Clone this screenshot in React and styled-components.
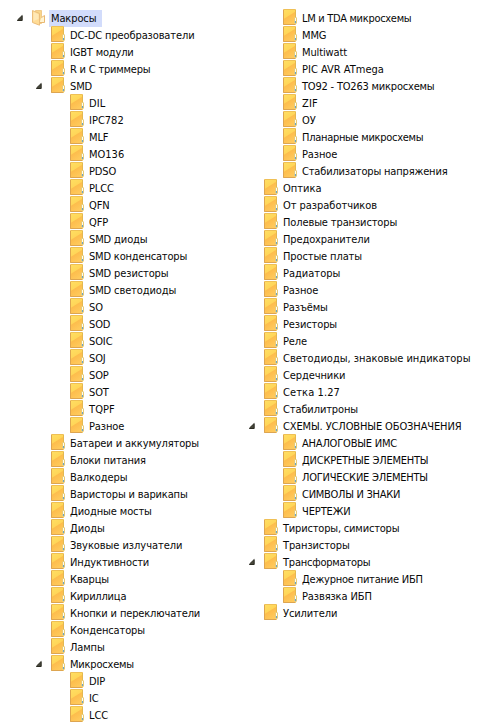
import React from "react";
import styled, { createGlobalStyle } from "styled-components";

const GlobalStyle = createGlobalStyle`
  html, body { margin: 0; background: #fff; }
`;

const Page = styled.main`
  display: grid;
  grid-template-columns: 213px 280px;
  align-items: start;
  box-sizing: border-box;
  width: 493px;
  height: 728px;
  padding-top: 10px;
  overflow: hidden;
  background: #fff;
  color: #080808;
  font: 11px/17px "DejaVu Sans Condensed", "DejaVu Sans", sans-serif;
  font-stretch: condensed;
`;

const Tree = styled.ul`
  margin: 0;
  padding: 0;
  list-style: none;
`;

const Row = styled.li`
  display: flex;
  align-items: center;
  height: 17px;
  padding-left: ${({ $level }) => 16 + $level * 19}px;
  white-space: nowrap;
`;

const ArrowSlot = styled.span`
  display: flex;
  flex: 0 0 16px;
  height: 16px;
  margin-bottom: 1px;
  align-items: center;
`;

const IconSlot = styled.span`
  display: flex;
  flex: 0 0 17px;
  height: 17px;
`;

const FolderSvg = styled.svg`
  margin-top: -1px;
`;

const Label = styled.span`
  height: 17px;
  line-height: 18px;
  padding: 0 ${({ $selected }) => ($selected ? 6 : 2)}px 0 2px;
  letter-spacing: ${({ $spacing }) => $spacing}px;
  background: ${({ $selected }) => ($selected ? "#d2dcfb" : "transparent")};
`;

function Arrow() {
  return (
    <svg width="8" height="8" viewBox="0 0 8 8">
      <path d="M6.2 1.5V6.5H1.5V6Z" fill="#45453a" stroke="#2b2b22" strokeWidth="1" />
    </svg>
  );
}

function Folder() {
  return (
    <FolderSvg width="16" height="17" viewBox="0 0 16 17">
      <defs>
        <linearGradient id="front" x1="0" y1="0" x2="0.5" y2="1">
          <stop offset="0" stopColor="#ffdf63" />
          <stop offset="0.48" stopColor="#ffd659" />
          <stop offset="0.54" stopColor="#fdbd4d" />
          <stop offset="1" stopColor="#ffc95b" />
        </linearGradient>
      </defs>
      <path d="M0.5 0.5H12.5V15.5H0.5Z" fill="url(#front)" stroke="#efc056" />
      <path d="M0.5 1V15.5H12" fill="none" stroke="#d89d50" strokeOpacity="0.8" />
      <path d="M12.5 1V9" stroke="#e3b850" />
      <rect x="11.5" y="8.5" width="2" height="6" rx="0.5" fill="#fff9dc" stroke="#e6ca78" />
      <path d="M12.5 9V12" stroke="#fffdf0" />
      <path d="M12.5 12V14" stroke="#6aa3c9" />
    </FolderSvg>
  );
}

function OpenFolder() {
  return (
    <svg width="16" height="17" viewBox="0 0 16 17">
      <path d="M3.5 0.5H9.5V13.5H3.5Z" fill="#f9d68b" stroke="#f0ca8b" />
      <path d="M9.5 7.5L12.5 5.5V12.5H7.5" fill="#fff4d4" stroke="#e9b873" />
      <path d="M0.5 0.5L7.5 3.5V15.2L0.5 12.5Z" fill="#ffdc96" stroke="#ebbd7c" />
      <path d="M1.5 2L6.5 4.2V9L1.5 11Z" fill="#ffe8b7" />
    </svg>
  );
}

// [level, label, expanded, letter spacing]
const leftItems = [
  [0, "Макросы", 1],
  [1, "DC-DC преобразователи"],
  [1, "IGBT модули", 0, -0.18],
  [1, "R и C триммеры", 0, -0.2],
  [1, "SMD", 1],
  [2, "DIL", 0, 0.1],
  [2, "IPC782", 0, 0],
  [2, "MLF"],
  [2, "MO136", 0, 0],
  [2, "PDSO"],
  [2, "PLCC"],
  [2, "QFN"],
  [2, "QFP"],
  [2, "SMD диоды"],
  [2, "SMD конденсаторы", 0, -0.18],
  [2, "SMD резисторы"],
  [2, "SMD светодиоды"],
  [2, "SO"],
  [2, "SOD"],
  [2, "SOIC"],
  [2, "SOJ"],
  [2, "SOP"],
  [2, "SOT"],
  [2, "TQPF", 0, 0.1],
  [2, "Разное"],
  [1, "Батареи и аккумуляторы"],
  [1, "Блоки питания", 0, -0.2],
  [1, "Валкодеры", 0, -0.1],
  [1, "Варисторы и варикапы", 0, -0.15],
  [1, "Диодные мосты", 0, -0.1],
  [1, "Диоды", 0, 0],
  [1, "Звуковые излучатели", 0, -0.05],
  [1, "Индуктивности"],
  [1, "Кварцы"],
  [1, "Кириллица", 0, -0.2],
  [1, "Кнопки и переключатели", 0, -0.14],
  [1, "Конденсаторы"],
  [1, "Лампы"],
  [1, "Микросхемы", 1, -0.2],
  [2, "DIP"],
  [2, "IC"],
  [2, "LCC"],
];

const rightItems = [
  [2, "LM и TDA микросхемы", 0, -0.3],
  [2, "MMG"],
  [2, "Multiwatt"],
  [2, "PIC AVR ATmega", 0, 0],
  [2, "TO92 - TO263 микросхемы", 0, -0.2],
  [2, "ZIF", 0, 0.2],
  [2, "ОУ"],
  [2, "Планарные микросхемы", 0, -0.29],
  [2, "Разное"],
  [2, "Стабилизаторы напряжения", 0, -0.17],
  [1, "Оптика", 0, 0],
  [1, "От разработчиков", 0, -0.04],
  [1, "Полевые транзисторы"],
  [1, "Предохранители"],
  [1, "Простые платы"],
  [1, "Радиаторы", 0, 0],
  [1, "Разное"],
  [1, "Разъёмы"],
  [1, "Резисторы"],
  [1, "Реле"],
  [1, "Светодиоды, знаковые индикаторы", 0, -0.01],
  [1, "Сердечники", 0, -0.1],
  [1, "Сетка 1.27", 0, 0.1],
  [1, "Стабилитроны"],
  [1, "СХЕМЫ. УСЛОВНЫЕ ОБОЗНАЧЕНИЯ", 1],
  [2, "АНАЛОГОВЫЕ ИМС", 0, -0.2],
  [2, "ДИСКРЕТНЫЕ ЭЛЕМЕНТЫ", 0, -0.22],
  [2, "ЛОГИЧЕСКИЕ ЭЛЕМЕНТЫ", 0, -0.22],
  [2, "СИМВОЛЫ И ЗНАКИ", 0, -0.28],
  [2, "ЧЕРТЕЖИ"],
  [1, "Тиристоры, симисторы", 0, -0.18],
  [1, "Транзисторы"],
  [1, "Трансформаторы", 1, -0.22],
  [2, "Дежурное питание ИБП", 0, -0.22],
  [2, "Развязка ИБП"],
  [1, "Усилители"],
];

function FolderTree({ items }) {
  return (
    <Tree>
      {items.map(([level, label, expanded, spacing = -0.12], index) => (
        <Row key={index} $level={level}>
          <ArrowSlot>{expanded ? <Arrow /> : null}</ArrowSlot>
          <IconSlot>{level === 0 ? <OpenFolder /> : <Folder />}</IconSlot>
          <Label $selected={level === 0} $spacing={spacing}>{label}</Label>
        </Row>
      ))}
    </Tree>
  );
}

export default function App() {
  return (
    <>
      <GlobalStyle />
      <Page>
        <FolderTree items={leftItems} />
        <FolderTree items={rightItems} />
      </Page>
    </>
  );
}
